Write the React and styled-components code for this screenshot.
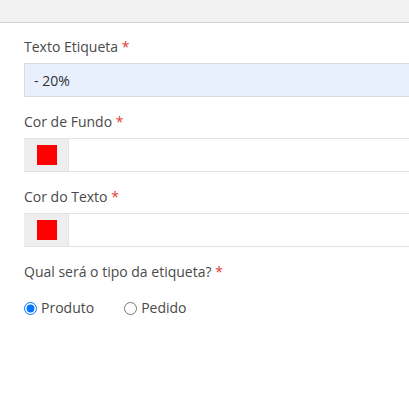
import React, { useState } from "react";
import styled, { createGlobalStyle } from "styled-components";

const GlobalStyle = createGlobalStyle`
  html, body {
    margin: 0;
    padding: 0;
    background: #ffffff;
    overflow: hidden;
  }
  body {
    font-family: "Open Sans", "Liberation Sans", sans-serif;
  }
`;

const Page = styled.div`
  width: 409px;
  min-height: 401px;
  overflow: hidden;
`;

const TopBar = styled.div`
  height: 22px;
  background: #f2f2f2;
  border-bottom: 1px solid #d0d0d0;
`;

const Form = styled.form`
  width: 420px;
  padding: 14px 0 0 24px;
  display: flex;
  flex-direction: column;
`;

const Field = styled.div`
  display: flex;
  flex-direction: column;
  gap: 6px;
  margin-bottom: 15px;
`;

const Label = styled.label`
  font-size: 14px;
  line-height: 20px;
  color: #4a4a4a;

  span {
    color: #e53935;
  }
`;

const TextInput = styled.input`
  box-sizing: border-box;
  height: 34px;
  width: 100%;
  border: 1px solid #dcdcdc;
  background: #e8f0fe;
  padding: 0 9px;
  font-family: inherit;
  font-size: 14px;
  color: #333;
  outline: none;
`;

const ColorGroup = styled.div`
  display: flex;
  height: 34px;
  box-sizing: border-box;
  border-top: 1px solid #e2e2e2;
  border-bottom: 1px solid #e2e2e2;
`;

const Addon = styled.div`
  box-sizing: border-box;
  width: 44px;
  padding-left: 13px;
  background: #eeeeee;
  display: flex;
  align-items: center;
`;

const Swatch = styled.div`
  width: 20px;
  height: 20px;
  background: ${(p) => p.color};
`;

const ColorValue = styled.div`
  flex: 1;
  background: #fff;
  border-left: 1px solid #e6e6e6;
`;

const Radios = styled.div`
  display: flex;
  align-items: center;
  gap: 30px;
  margin-top: 16px;
`;

const RadioLabel = styled.label`
  display: flex;
  align-items: center;
  font-size: 14px;
  color: #4a4a4a;
  line-height: 20px;

  input {
    width: 13px;
    height: 13px;
    margin: 0 4px 0 0;
  }
`;

const App = () => {
  const [tipo, setTipo] = useState("produto");

  return (
    <Page>
      <GlobalStyle />
      <TopBar />
      <Form>
        <Field>
          <Label>
            Texto Etiqueta <span>*</span>
          </Label>
          <TextInput defaultValue="- 20%" />
        </Field>

        <Field>
          <Label>
            Cor de Fundo <span>*</span>
          </Label>
          <ColorGroup>
            <Addon>
              <Swatch color="#ff0000" />
            </Addon>
            <ColorValue />
          </ColorGroup>
        </Field>

        <Field>
          <Label>
            Cor do Texto <span>*</span>
          </Label>
          <ColorGroup>
            <Addon>
              <Swatch color="#ff0000" />
            </Addon>
            <ColorValue />
          </ColorGroup>
        </Field>

        <Label>
          Qual será o tipo da etiqueta? <span>*</span>
        </Label>
        <Radios>
          <RadioLabel>
            <input
              type="radio"
              name="tipo"
              checked={tipo === "produto"}
              onChange={() => setTipo("produto")}
            />
            Produto
          </RadioLabel>
          <RadioLabel>
            <input
              type="radio"
              name="tipo"
              checked={tipo === "pedido"}
              onChange={() => setTipo("pedido")}
            />
            Pedido
          </RadioLabel>
        </Radios>
      </Form>
    </Page>
  );
};

export default App;
